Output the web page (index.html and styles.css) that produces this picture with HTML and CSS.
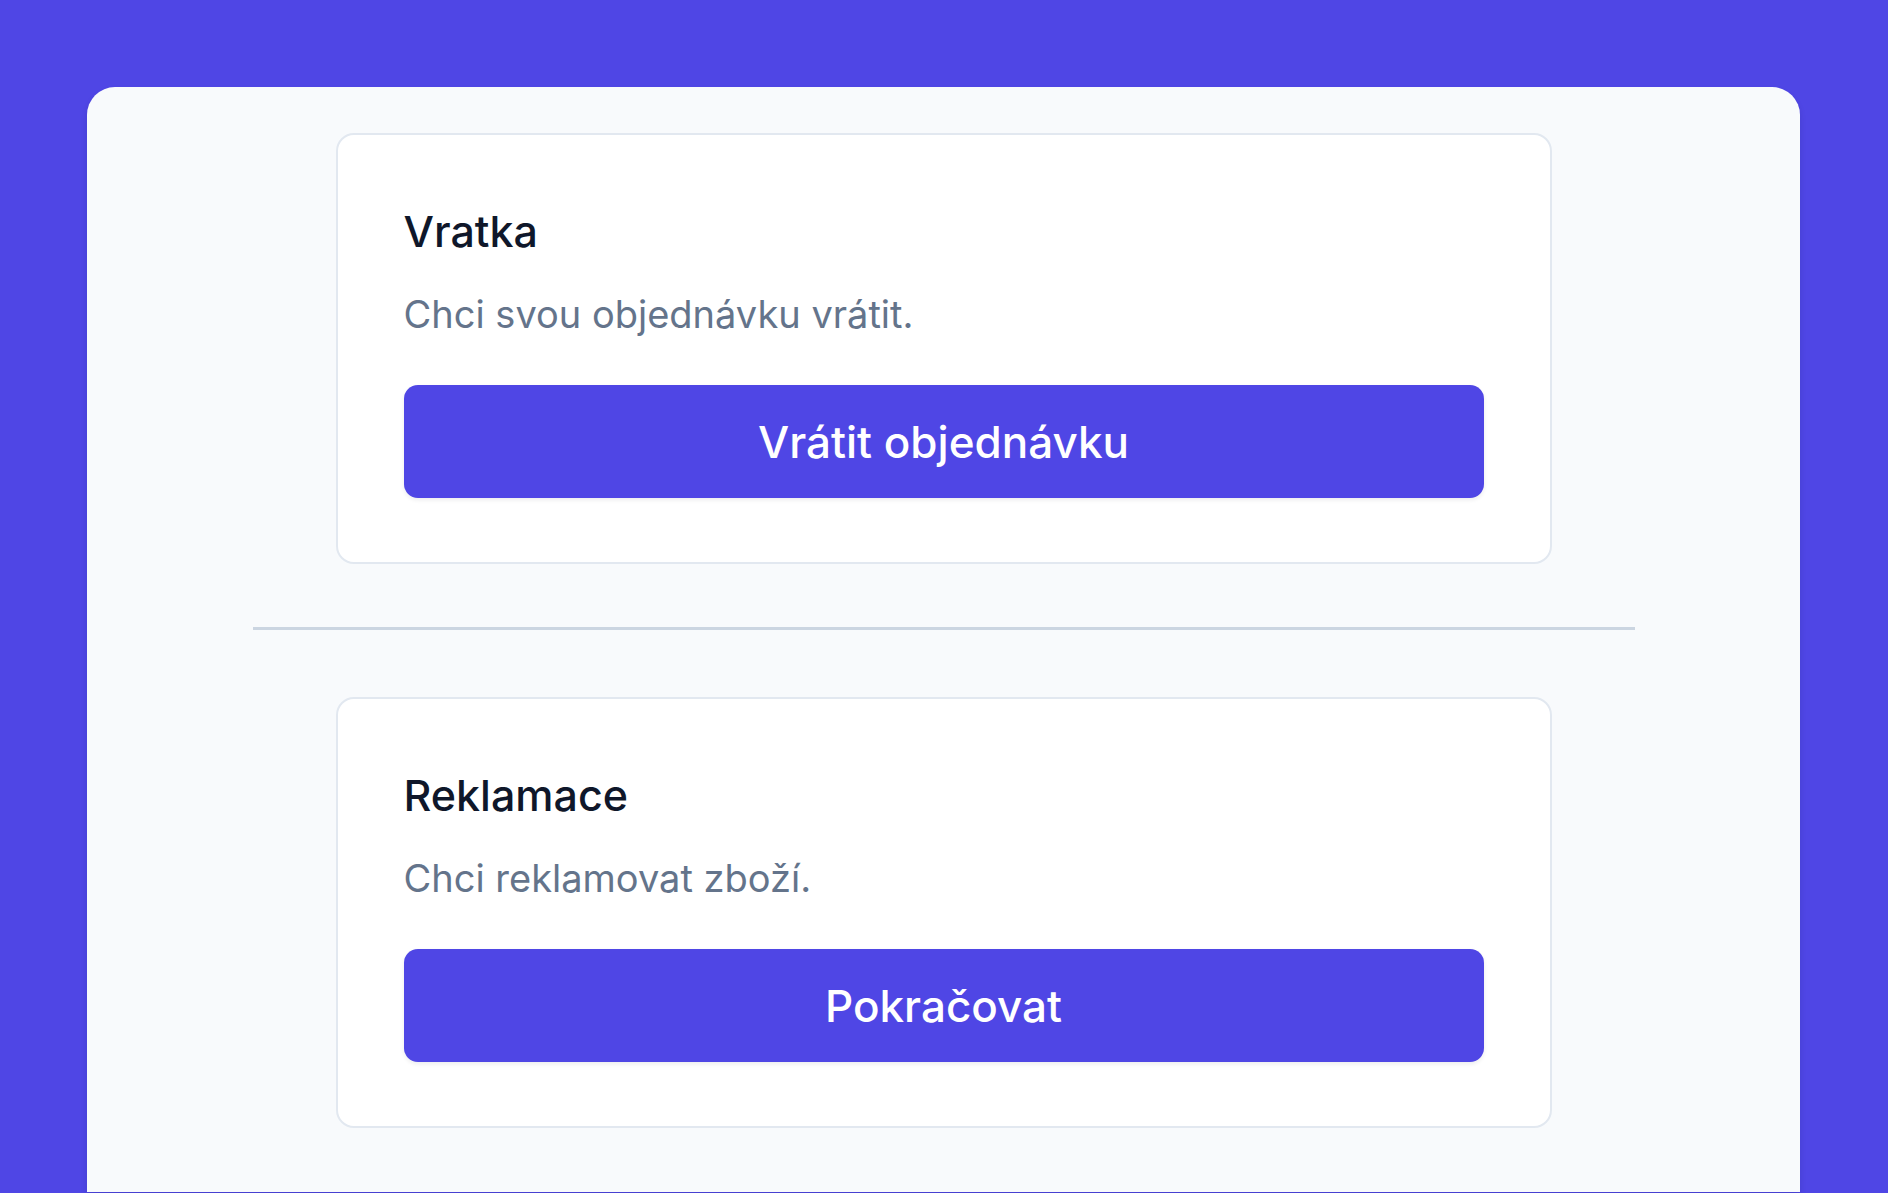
FILE: index.html
```html
<!DOCTYPE html>
<html lang="cs">
<head>
    <meta charset="UTF-8">
    <title>Vratka a reklamace</title>
    <link rel="stylesheet" href="styles.css">
</head>
<body>

<div class="hero">
    <div class="panel">
        <div class="content">
            <div class="option-card">
                <h3>Vratka</h3>
                <p>Chci svou objednávku vrátit.</p>
                <button type="button">Vrátit objednávku</button>
            </div>

            <hr class="divider">

            <div class="option-card">
                <h3>Reklamace</h3>
                <p>Chci reklamovat zboží.</p>
                <button type="button">Pokračovat</button>
            </div>
        </div>
    </div>
</div>

</body>
</html>
```

FILE: styles.css
```css
body {
    margin: 0;
    font-family: Inter, "Noto Sans", sans-serif;
    font-optical-sizing: none;
    background-color: #ffffff;
    color: #0f172a;
}
.hero {
    background-color: #4f46e5;
    padding: 87px 88px 1px 87px;
}
.panel {
    background-color: #f8fafc;
    border-radius: 28px 28px 0 0;
    padding: 46px 0 64px;
    box-shadow: 0 4px 6px rgba(15, 23, 42, 0.12);
}
.content {
    max-width: 1382px;
    margin: 0 auto;
}
.option-card {
    max-width: 1216px;
    box-sizing: border-box;
    margin: 0 auto;
    background-color: #ffffff;
    border: 2px solid #e2e8f0;
    border-radius: 18px;
    padding: 64px 66px;
}
.option-card h3 {
    margin: 0;
    font-size: 43px;
    line-height: 64px;
    font-weight: 500;
    color: #0f172a;
}
.option-card p {
    margin: 23px 0 42px;
    font-size: 38px;
    line-height: 57px;
    color: #64748b;
}
.option-card button {
    display: block;
    width: 100%;
    height: 113px;
    border: none;
    border-radius: 14px;
    background-color: #4f46e5;
    color: #ffffff;
    font-family: inherit;
    font-size: 44px;
    font-weight: 500;
    cursor: pointer;
    box-shadow: 0 2px 4px rgba(15, 23, 42, 0.08);
}
.option-card button:hover {
    background-color: #4338ca;
}
.divider {
    border: none;
    height: 3px;
    background-color: #cbd5e1;
    margin: 63px 0 67px;
}
```
